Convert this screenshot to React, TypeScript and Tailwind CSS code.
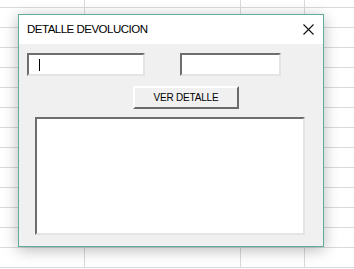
const colWidths = ['w-[85px]', 'w-[156px]', 'w-[64px]', 'w-[49px]'];
const rows = Array.from({ length: 14 }, (_, i) => i);

function Sheet() {
  return (
    <div className="flex flex-col">
      {rows.map((r) => (
        <div key={r} className={`flex ${r === 0 ? 'h-[8px]' : 'h-[20px]'}`}>
          {colWidths.map((w, c) => (
            <div
              key={c}
              className={`${w} shrink-0 border-b border-r border-[#dadada] ${c === 3 ? 'border-r-0' : ''}`}
            />
          ))}
        </div>
      ))}
    </div>
  );
}

function SunkenBox({ className, children }: { className: string; children?: React.ReactNode }) {
  return (
    <div
      className={`bg-white border-2 border-t-[#6e6e6e] border-l-[#6e6e6e] border-r-[#e4e4e4] border-b-[#e4e4e4] ${className}`}
    >
      {children}
    </div>
  );
}

export default function App() {
  return (
    <div
      className="relative w-[354px] h-[269px] overflow-hidden bg-white"
      style={{ fontFamily: '"Liberation Sans", Arial, sans-serif' }}
    >
      <Sheet />

      {/* dialog */}
      <div className="absolute left-[18px] top-[14px] w-[306px] h-[233px] flex flex-col border border-[#5fae9c] bg-[#f0f0f0] shadow-[0_3px_14px_rgba(0,0,0,0.28)]">
        <div className="h-[29px] shrink-0 bg-white flex items-center justify-between pl-[8px] pr-[8px]">
          <span className="text-[11.5px] tracking-[-0.5px] text-black leading-none">DETALLE DEVOLUCION</span>
          <svg width="11" height="11" viewBox="0 0 11 11" className="mr-[1px]">
            <path d="M0.5 0.5 L10.5 10.5 M10.5 0.5 L0.5 10.5" stroke="#111" strokeWidth="1.1" fill="none" />
          </svg>
        </div>

        <div className="flex flex-col pt-[9px]">
          <div className="flex gap-[35px] pl-[8px]">
            <SunkenBox className="w-[118px] h-[23px] flex items-center pl-[10px]">
              <div className="w-[1px] h-[12px] bg-black" />
            </SunkenBox>
            <SunkenBox className="w-[101px] h-[23px]" />
          </div>

          <button className="ml-[114px] mt-[10px] w-[106px] h-[23px] flex items-center justify-center bg-[#f0f0f0] border-2 border-t-white border-l-white border-r-[#6a6a6a] border-b-[#6a6a6a] text-[10px] tracking-[-0.2px] text-black leading-none">
            VER DETALLE
          </button>

          <SunkenBox className="ml-[16px] mt-[8px] w-[270px] h-[118px]" />
        </div>
      </div>
    </div>
  );
}
